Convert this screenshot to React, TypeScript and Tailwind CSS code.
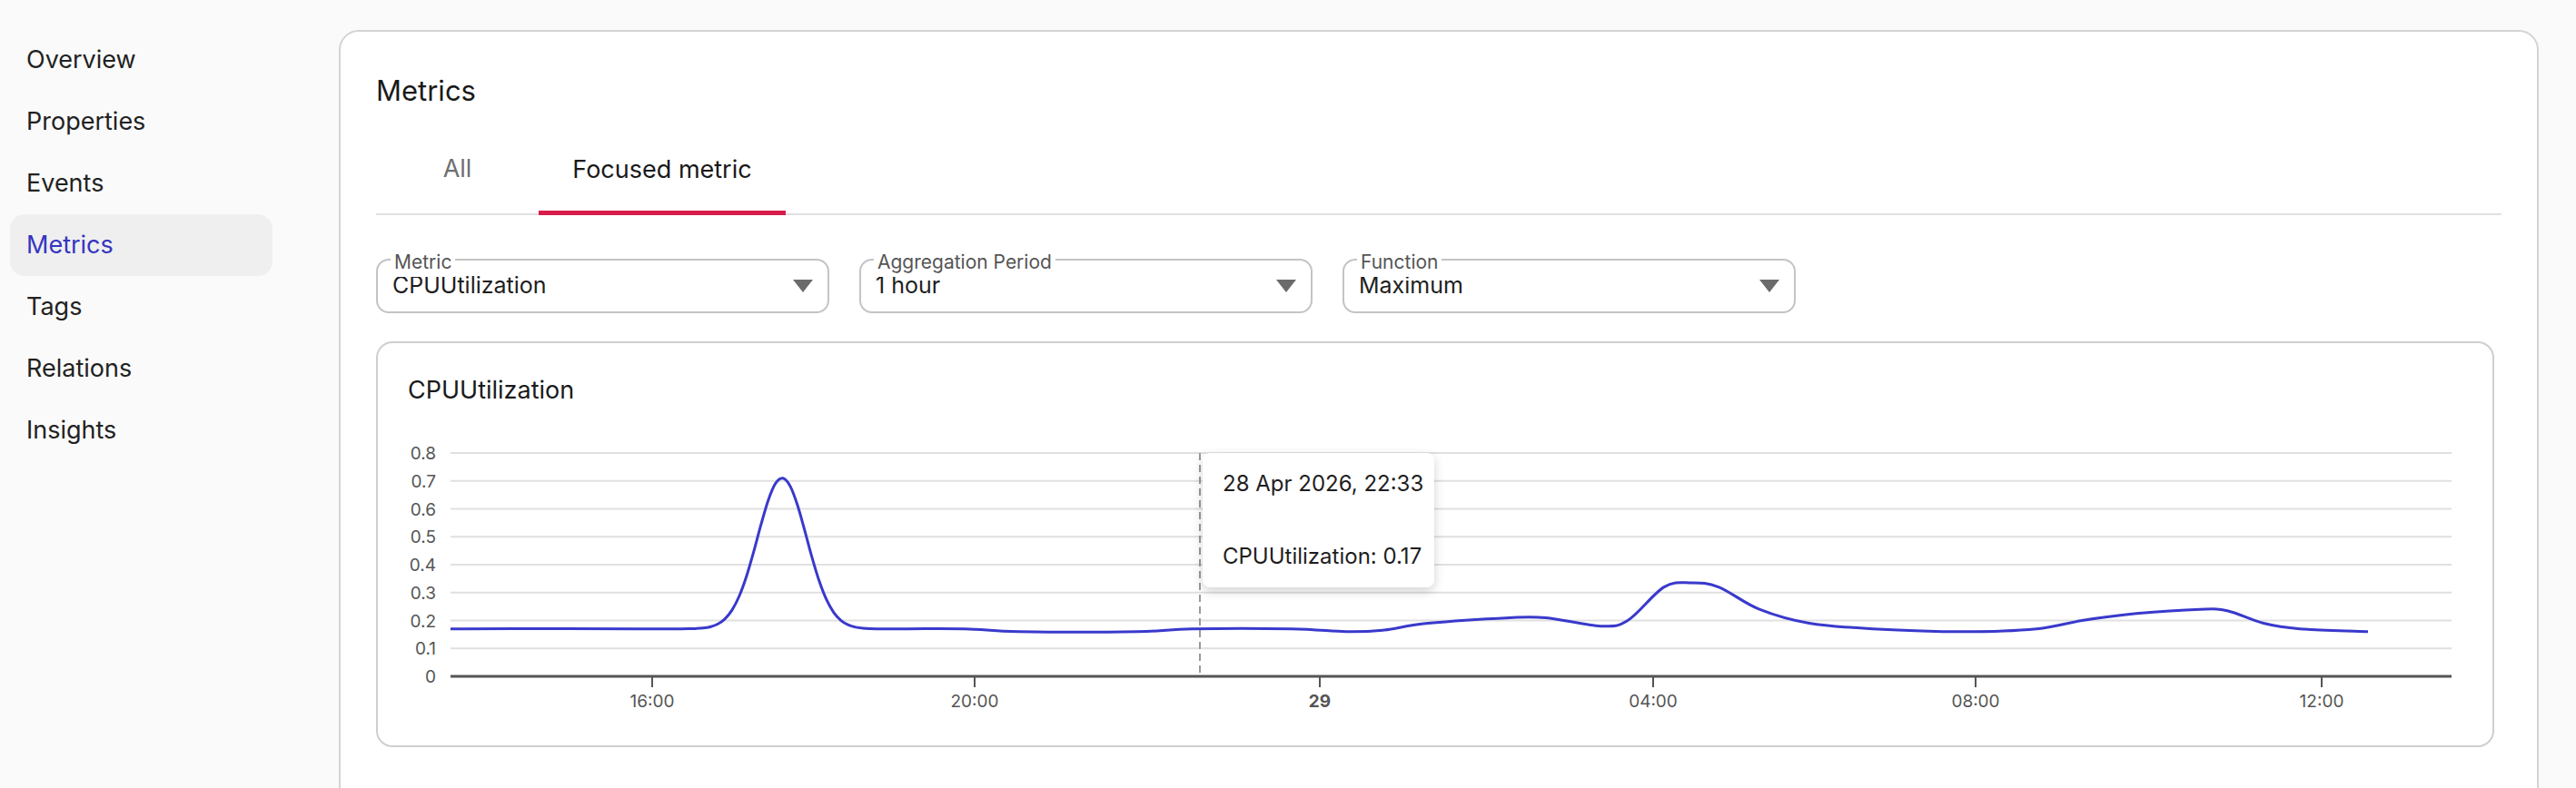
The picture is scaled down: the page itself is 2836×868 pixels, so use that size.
import React from "react";

const nav = ["Overview", "Properties", "Events", "Metrics", "Tags", "Relations", "Insights"];

const peak: [number, number][] = [];
for (let x = 740; x <= 980; x += 8) {
  peak.push([x, 0.17 + 0.54 * Math.exp(-((x - 859) ** 2) / (2 * 27 * 27))]);
}

// [real x on page, value]
const pts: [number, number][] = [
  [494, 0.17], [620, 0.171], [700, 0.17],
  ...peak,
  [1060, 0.17], [1120, 0.16], [1250, 0.16], [1310, 0.17],
  [1420, 0.17], [1480, 0.16], [1520, 0.165], [1570, 0.19], [1660, 0.21], [1700, 0.21],
  [1760, 0.18], [1790, 0.2], [1830, 0.32], [1860, 0.335], [1890, 0.32], [1935, 0.24],
  [1990, 0.19], [2060, 0.17], [2160, 0.16], [2240, 0.17], [2290, 0.2], [2350, 0.225],
  [2420, 0.24], [2450, 0.235], [2490, 0.19], [2530, 0.17], [2605, 0.16],
];

const OX = 414;
const Y0 = 279;
const yv = (v: number) => Y0 - v * 307.5;

function curve() {
  const p = pts.map(([x, v]) => [x - OX, yv(v)]);
  let d = `M${p[0][0]},${p[0][1]}`;
  for (let i = 0; i < p.length - 1; i++) {
    const p0 = p[i - 1] || p[i];
    const p1 = p[i];
    const p2 = p[i + 1];
    const p3 = p[i + 2] || p2;
    const c1x = p1[0] + (p2[0] - p0[0]) / 6;
    const c1y = p1[1] + (p2[1] - p0[1]) / 6;
    const c2x = p2[0] - (p3[0] - p1[0]) / 6;
    const c2y = p2[1] - (p3[1] - p1[1]) / 6;
    d += ` C${c1x},${c1y} ${c2x},${c2y} ${p2[0]},${p2[1]}`;
  }
  return d;
}

const xticks: [number, string, boolean][] = [
  [716, "16:00", false], [1071, "20:00", false], [1451, "29", true],
  [1818, "04:00", false], [2173, "08:00", false], [2554, "12:00", false],
];

function Select({ label, value, w }: { label: string; value: string; w: string }) {
  return (
    <div className={`relative h-[60px] ${w} rounded-[14px] border-2 border-[#c4c4c4] flex items-center px-4`}>
      <span className="absolute -top-[14px] left-[14px] bg-white px-1 text-[21px] text-[#555]">{label}</span>
      <span className="text-[25px] text-[#1e1e1e] flex-1">{value}</span>
      <svg width="22" height="14" viewBox="0 0 22 14"><path d="M0 0h22L11 14z" fill="#6b6b6b" /></svg>
    </div>
  );
}

export default function App() {
  return (
    <div className="flex h-[868px] overflow-hidden bg-[#fafafa]" style={{ fontFamily: "Inter, 'Noto Sans', sans-serif" }}>
      <aside className="w-[373px] shrink-0 pl-[11px] pt-[32px]">
        <nav className="flex flex-col w-[289px]">
          {nav.map((n) => (
            <div
              key={n}
              className={`h-[68px] flex items-center pl-[18px] rounded-[16px] text-[27px] ${
                n === "Metrics" ? "bg-[#efefef] text-[#3535c0]" : "text-[#222]"
              }`}
            >
              {n}
            </div>
          ))}
        </nav>
      </aside>
      <main className="mt-[33px] w-[2422px] h-[900px] shrink-0 bg-white border-2 border-[#d4d4d4] rounded-[22px] px-[39px] pt-[40px]">
        <h2 className="text-[31px] text-[#1a1a1a] leading-[50px]">Metrics</h2>
        <div className="flex border-b-2 border-[#e0e0e0] h-[100px] mt-[12px]">
          <div className="w-[179px] flex items-center justify-center text-[27px] text-[#6f6f6f]">All</div>
          <div className="w-[272px] flex items-center justify-center text-[27px] text-[#1a1a1a] border-b-[5px] border-[#d81b4b] -mb-[2px] pt-[5px]">
            Focused metric
          </div>
        </div>
        <div className="flex gap-[33px] mt-[48px]">
          <Select label="Metric" value="CPUUtilization" w="w-[499px]" />
          <Select label="Aggregation Period" value="1 hour" w="w-[499px]" />
          <Select label="Function" value="Maximum" w="w-[499px]" />
        </div>
        <div className="mt-[31px] w-[2332px] h-[447px] border-2 border-[#cfcfcf] rounded-[18px] relative">
          <div className="pl-[33px] pt-[34px] text-[27px] text-[#1a1a1a] leading-[36px]">CPUUtilization</div>
          <svg className="absolute left-0 top-[88px]" width="2330" height="340" style={{ fontFamily: "Inter, sans-serif" }}>
            {[0, 1, 2, 3, 4, 5, 6, 7, 8].map((k) => (
              <g key={k}>
                {k > 0 && <line x1="80" x2="2283" y1={yv(k / 10)} y2={yv(k / 10)} stroke="#e0e0e0" strokeWidth="2" />}
                <text x="64" y={yv(k / 10) + 7} textAnchor="end" fontSize="19" fill="#555">
                  {k === 0 ? "0" : `0.${k}`}
                </text>
              </g>
            ))}
            <line x1={1319 - OX} x2={1319 - OX} y1="33" y2={Y0} stroke="#9a9a9a" strokeWidth="2" strokeDasharray="8 5" />
            <path d={curve()} fill="none" stroke="#3939cc" strokeWidth="3" />
            <line x1="80" x2="2283" y1={Y0} y2={Y0} stroke="#555" strokeWidth="3" />
            {xticks.map(([x, t, b]) => (
              <g key={t}>
                <line x1={x - OX} x2={x - OX} y1={Y0} y2={Y0 + 12} stroke="#555" strokeWidth="2" />
                <text x={x - OX} y={Y0 + 34} textAnchor="middle" fontSize="19" fill="#555" fontWeight={b ? 700 : 400}>
                  {t}
                </text>
              </g>
            ))}
          </svg>
          <div className="absolute left-[908px] top-[121px] w-[255px] h-[148px] bg-white rounded-[8px] shadow-[0_4px_12px_rgba(0,0,0,0.18)] pl-[22px] flex flex-col justify-center gap-[44px] text-[24px] text-[#1e1e1e]">
            <span>28 Apr 2026, 22:33</span>
            <span>CPUUtilization: 0.17</span>
          </div>
        </div>
      </main>
    </div>
  );
}
